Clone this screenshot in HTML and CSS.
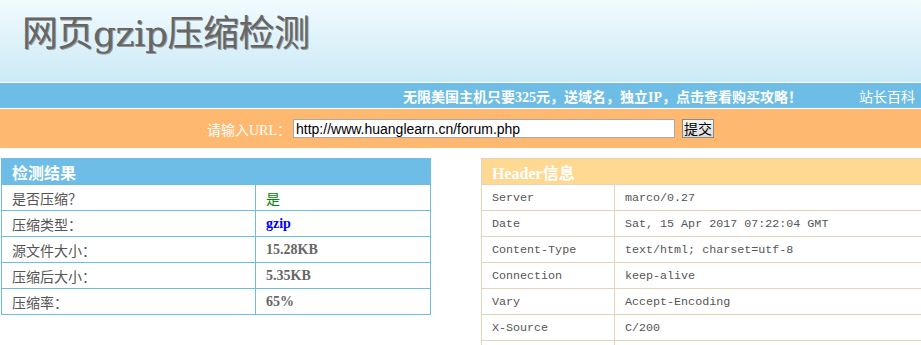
FILE: index.html
```html
<!DOCTYPE html>
<html lang="zh-CN">
<head>
  <meta charset="UTF-8" />
  <title>网页gzip压缩检测</title>
  <link rel="stylesheet" href="styles.css">
</head>
<body>
  <div class="top">
    <h1>网页gzip压缩检测</h1>
  </div>

  <div class="adbar">
    <a href="#" class="ad">无限美国主机只要325元，送域名，独立IP，点击查看购买攻略！</a>
    <a href="#" class="wiki">站长百科</a>
  </div>

  <form class="search" onsubmit="return false">
    <label for="url">请输入URL：</label>
    <input type="text" id="url" value="http://www.huanglearn.cn/forum.php" />
    <button type="submit">提交</button>
  </form>

  <main class="results">
    <table class="result">
      <tr><th colspan="2">检测结果</th></tr>
      <tr><td class="k">是否压缩？</td><td class="v yes">是</td></tr>
      <tr><td class="k">压缩类型：</td><td class="v type">gzip</td></tr>
      <tr><td class="k">源文件大小：</td><td class="v">15.28KB</td></tr>
      <tr><td class="k">压缩后大小：</td><td class="v">5.35KB</td></tr>
      <tr><td class="k">压缩率：</td><td class="v">65%</td></tr>
    </table>

    <div class="headers-wrap">
      <table class="headers">
        <tr><th colspan="2">Header信息</th></tr>
        <tr><td class="k">Server</td><td>marco/0.27</td></tr>
        <tr><td class="k">Date</td><td>Sat, 15 Apr 2017 07:22:04 GMT</td></tr>
        <tr><td class="k">Content-Type</td><td>text/html; charset=utf-8</td></tr>
        <tr><td class="k">Connection</td><td>keep-alive</td></tr>
        <tr><td class="k">Vary</td><td>Accept-Encoding</td></tr>
        <tr><td class="k">X-Source</td><td>C/200</td></tr>
        <tr><td class="k"></td><td></td></tr>
      </table>
    </div>
  </main>
</body>
</html>
```

FILE: styles.css
```css
body { margin: 0; font-family: "Liberation Serif", "Noto Sans CJK SC", serif; color: #555; overflow: hidden; }
a { text-decoration: none; color: #fff; }

.top { height: 82px; background: linear-gradient(#f2fbfe, #cbeaf7); border-bottom: 1px solid #fff; }
.top h1 { margin: 0; padding: 12px 0 0 22px; font: normal 36px/44px "DejaVu Serif", "Noto Sans CJK SC", serif; color: #666; text-shadow: 1px 1px 0 #999; letter-spacing: -0.5px; }

.adbar { height: 25px; background: #6dbde7; border-bottom: 1px solid #fff; display: flex; justify-content: flex-end; align-items: center; padding-right: 6px; font-size: 14px; }
.adbar .ad { font-weight: bold; margin-right: 57px; }

.search { height: 39px; background: #ffb870; display: flex; justify-content: center; align-items: center; font-size: 14px; }
.search label { color: #fff; margin-right: 2px; }
.search input { width: 376px; height: 15px; padding: 1px 2px; border: 1px solid #a9a9a9; font: 14px "Liberation Sans", Arial, sans-serif; color: #000; margin: 0 7px 0 0; }
.search button { height: 19px; padding: 0 1px; font: 14px "Noto Sans CJK SC", sans-serif; line-height: 15px; border: 1px solid #8a8a8a; background: linear-gradient(#f6f6f6, #dcdcdc); }

.results { display: flex; align-items: flex-start; gap: 50px; padding: 10px 0 0 1px; }
table { border-collapse: collapse; }
th { height: 25px; text-align: left; padding: 0 0 0 10px; color: #fff; font-size: 16px; font-weight: bold; }
td { height: 25px; padding: 0 0 0 10px; }

.result { width: 430px; border: 1px solid #6dbde7; }
.result th { background: #6dbde7; }
.result td { border: 1px solid #6dbde7; }
.result .k { width: 243px; font: 14px "Noto Sans CJK SC", sans-serif; color: #555; }
.result .v { font-weight: bold; font-size: 14px; color: #666; }
.result .yes { color: #080; font-family: "Noto Sans CJK SC", sans-serif; font-weight: normal; }
.result .type { color: #00f; }

.headers-wrap { flex: 1; overflow: hidden; }
.headers { width: calc(100% + 20px); border: 1px solid #e3d5b9; }
.headers th { background: #ffd892; }
.headers td { border: 1px solid #e3d5b9; font: 11.7px "Liberation Mono", monospace; color: #555; }
.headers .k { width: 122px; }
```
